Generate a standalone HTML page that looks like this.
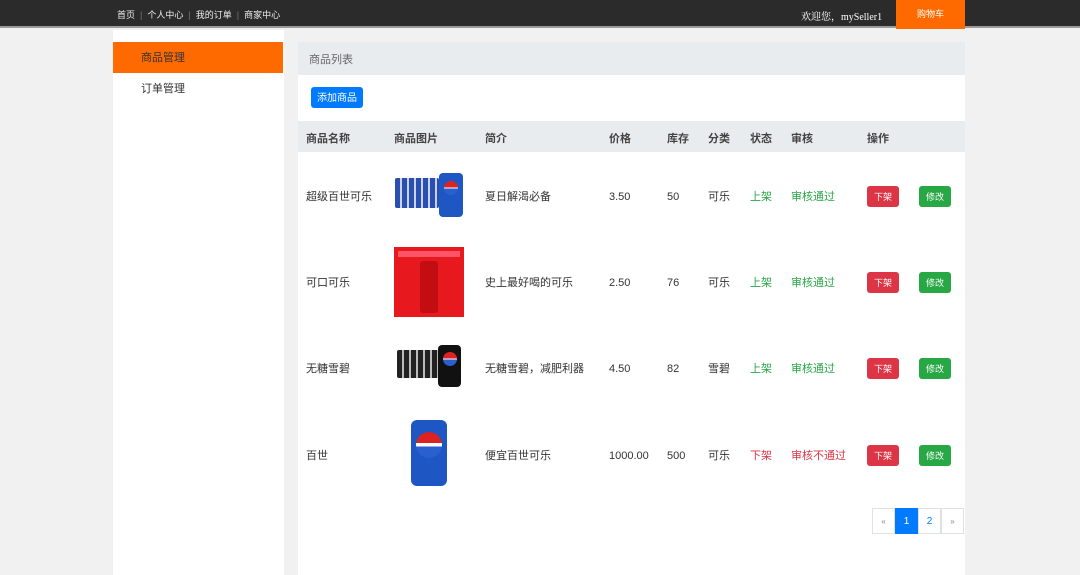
<!DOCTYPE html>
<html><head><meta charset="utf-8"><style>
*{margin:0;padding:0;box-sizing:border-box}
body{width:1080px;height:575px;overflow:hidden;background:#f1f1f1;font-family:"Liberation Sans","Noto Sans CJK SC",sans-serif;color:#333;position:relative;font-size:12px}
.top{position:absolute;left:0;top:0;width:1080px;height:28px;background:#2b2b2b;border-bottom:2px solid #9a9a9a}
.nav{position:absolute;left:117px;top:8px;color:#eee;font-size:9px}
.nav i{color:#777;font-style:normal;margin:0 5px}
.welcome{position:absolute;left:801px;top:8px;color:#fff;font-size:10px;font-family:"Liberation Serif","Noto Serif CJK SC",serif}
.cart{position:absolute;left:896px;top:0;width:69px;height:29px;background:#ff6a00;color:#fff;font-size:9px;text-align:center;line-height:29px}
.side{position:absolute;left:113px;top:30px;width:171px;height:545px;background:#fff}
.si{position:absolute;left:0;width:170px;height:31px;line-height:33px;padding-left:28px;font-size:11px}
.main{position:absolute;left:298px;top:42px;width:667px;height:533px;background:#fff}
.ph{height:33px;background:#e9ecef;line-height:36px;padding-left:11px;color:#666;font-size:11px}
.add{position:absolute;left:13px;top:45px;width:52px;height:21px;background:#007bff;color:#fff;border-radius:3px;font-size:10px;text-align:center;line-height:23px}
.th{position:absolute;left:0;top:79px;width:667px;height:31px;background:#e9ecef}
.t{position:absolute;font-size:11px;white-space:nowrap;line-height:16px;height:16px}
.h{font-weight:bold;color:#444;top:89px}
.g{color:#28a745}.r{color:#dc3545}
.b{position:absolute;width:32px;height:21px;border-radius:3px;color:#fff;font-size:9px;text-align:center;line-height:23px}
.pg{position:absolute;top:466px;height:26px;width:23px;border:1px solid #dee2e6;text-align:center;line-height:26px;font-size:10px;color:#007bff;background:#fff}
</style></head><body>
<div class="top"></div>
<div class="nav">首页<i>|</i>个人中心<i>|</i>我的订单<i>|</i>商家中心</div>
<div class="welcome">欢迎您，mySeller1</div>
<div class="cart">购物车</div>
<div class="side">
<div class="si" style="top:12px;background:#ff6a00;color:#333">商品管理</div>
<div class="si" style="top:43px">订单管理</div>
</div>
<div class="main">
<div class="ph">商品列表</div>
<div class="add">添加商品</div>
<div class="th"></div>
<div class="t h" style="left:8px">商品名称</div><div class="t h" style="left:96px">商品图片</div><div class="t h" style="left:187px">简介</div><div class="t h" style="left:311px">价格</div><div class="t h" style="left:369px">库存</div><div class="t h" style="left:410px">分类</div><div class="t h" style="left:452px">状态</div><div class="t h" style="left:493px">审核</div><div class="t h" style="left:569px">操作</div>

<div class="t" style="left:8px;top:147px">超级百世可乐</div>
<div style="position:absolute;left:97px;top:136px;width:44px;height:30px;background:repeating-linear-gradient(90deg,#2a4fb0 0 5px,#c8d3ee 5px 7px);border-radius:2px"></div>
<div style="position:absolute;left:141px;top:131px;width:24px;height:44px;background:#1e56c4;border-radius:4px"><div style="width:14px;height:14px;margin:8px auto;border-radius:50%;background:linear-gradient(#d22 0 45%,#fff 45% 55%,#2a5fd0 55%)"></div></div>
<div class="t" style="left:187px;top:147px">夏日解渴必备</div>
<div class="t" style="left:311px;top:147px">3.50</div><div class="t" style="left:369px;top:147px">50</div><div class="t" style="left:410px;top:147px">可乐</div>
<div class="t g" style="left:452px;top:147px">上架</div><div class="t g" style="left:493px;top:147px">审核通过</div>
<div class="b" style="left:569px;top:144px;background:#dc3545">下架</div><div class="b" style="left:621px;top:144px;background:#28a745">修改</div>

<div class="t" style="left:8px;top:233px">可口可乐</div>
<div style="position:absolute;left:96px;top:205px;width:70px;height:70px;background:#e8191e"><div style="position:absolute;left:26px;top:14px;width:18px;height:52px;background:#c40d12;border-radius:3px"></div><div style="position:absolute;left:4px;top:4px;width:62px;height:6px;background:#f56"></div></div>
<div class="t" style="left:187px;top:233px">史上最好喝的可乐</div>
<div class="t" style="left:311px;top:233px">2.50</div><div class="t" style="left:369px;top:233px">76</div><div class="t" style="left:410px;top:233px">可乐</div>
<div class="t g" style="left:452px;top:233px">上架</div><div class="t g" style="left:493px;top:233px">审核通过</div>
<div class="b" style="left:569px;top:230px;background:#dc3545">下架</div><div class="b" style="left:621px;top:230px;background:#28a745">修改</div>

<div class="t" style="left:8px;top:319px">无糖雪碧</div>
<div style="position:absolute;left:99px;top:308px;width:42px;height:28px;background:repeating-linear-gradient(90deg,#222 0 5px,#bbb 5px 7px);border-radius:2px"></div>
<div style="position:absolute;left:140px;top:303px;width:23px;height:42px;background:#111;border-radius:4px"><div style="width:14px;height:14px;margin:7px auto;border-radius:50%;background:linear-gradient(#d22 0 45%,#fff 45% 55%,#2a5fd0 55%)"></div></div>
<div class="t" style="left:187px;top:319px">无糖雪碧，减肥利器</div>
<div class="t" style="left:311px;top:319px">4.50</div><div class="t" style="left:369px;top:319px">82</div><div class="t" style="left:410px;top:319px">雪碧</div>
<div class="t g" style="left:452px;top:319px">上架</div><div class="t g" style="left:493px;top:319px">审核通过</div>
<div class="b" style="left:569px;top:316px;background:#dc3545">下架</div><div class="b" style="left:621px;top:316px;background:#28a745">修改</div>

<div class="t" style="left:8px;top:406px">百世</div>
<div style="position:absolute;left:113px;top:378px;width:36px;height:66px;background:#1e56c4;border-radius:6px"><div style="width:26px;height:26px;margin:12px auto;border-radius:50%;background:linear-gradient(#d22 0 42%,#fff 42% 55%,#2a5fd0 55%)"></div></div>
<div class="t" style="left:187px;top:406px">便宜百世可乐</div>
<div class="t" style="left:311px;top:406px">1000.00</div><div class="t" style="left:369px;top:406px">500</div><div class="t" style="left:410px;top:406px">可乐</div>
<div class="t r" style="left:452px;top:406px">下架</div><div class="t r" style="left:493px;top:406px">审核不通过</div>
<div class="b" style="left:569px;top:403px;background:#dc3545">下架</div><div class="b" style="left:621px;top:403px;background:#28a745">修改</div>

<div class="pg" style="left:574px;color:#888;font-size:8px">«</div>
<div class="pg" style="left:597px;background:#007bff;border-color:#007bff;color:#fff">1</div>
<div class="pg" style="left:620px">2</div>
<div class="pg" style="left:643px;color:#888;font-size:8px">»</div>
</div>
</body></html>
